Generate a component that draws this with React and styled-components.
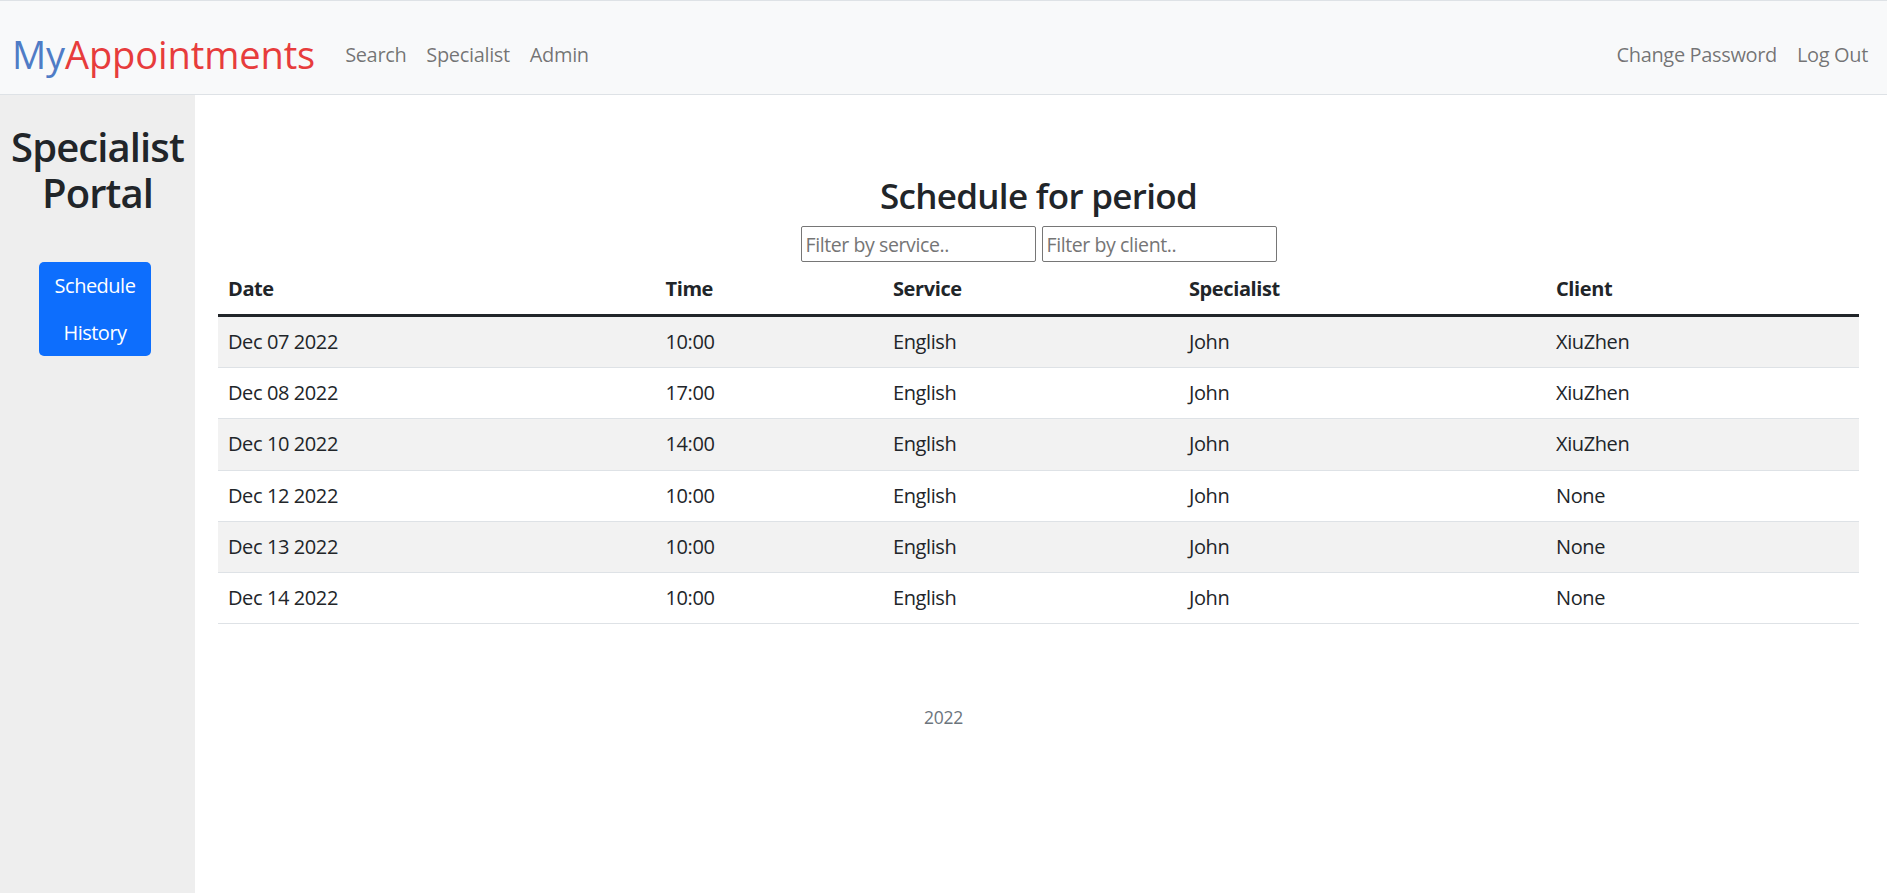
import React from "react";
import styled, { createGlobalStyle } from "styled-components";

/* ========================
   Global
   ======================== */
const GlobalStyle = createGlobalStyle`
  * {
    margin: 0;
    padding: 0;
    box-sizing: border-box;
  }
  body {
    font-family: "Open Sans", "Noto Sans", sans-serif;
    font-size: 20px;
    line-height: 1.5;
    color: #212529;
    background: #ffffff;
  }
`;

/* ========================
   Navbar
   ======================== */
const Navbar = styled.nav`
  display: flex;
  align-items: center;
  height: 95px;
  padding: 14px 9px 0 12px;
  background: #f8f9fa;
  border-top: 1px solid #dee2e6;
  border-bottom: 1px solid #dee2e6;
`;
const Brand = styled.a`
  font-size: 38px;
  line-height: 1.5;
  margin-right: 20px;
  text-decoration: none;
  letter-spacing: -0.1px;
`;
const BrandPart = styled.span`
  color: ${(p) => p.$color};
`;
const NavGroup = styled.div`
  display: flex;
  align-items: center;
  margin-left: ${(p) => (p.$right ? "auto" : "0")};
`;
const NavLink = styled.a`
  padding: 10px;
  font-size: 20px;
  color: rgba(0, 0, 0, 0.55);
  text-decoration: none;
  letter-spacing: -0.35px;
  cursor: pointer;
`;

/* ========================
   Page body
   ======================== */
const Layout = styled.div`
  display: flex;
  min-height: calc(100vh - 95px);
`;
const Sidebar = styled.aside`
  width: 195px;
  flex-shrink: 0;
  background: #eeeeee;
  padding-top: 29px;
  display: flex;
  flex-direction: column;
  align-items: center;
`;
const PortalTitle = styled.h2`
  font-size: 40px;
  font-weight: 600;
  line-height: 46px;
  text-align: center;
  letter-spacing: -0.9px;
  margin-bottom: 46px;
`;
const SideMenu = styled.div`
  width: 112px;
  margin-right: 5px;
  background: #0d6efd;
  border-radius: 5px;
  display: flex;
  flex-direction: column;
`;
const SideLink = styled.a`
  height: 47px;
  line-height: 47px;
  text-align: center;
  color: #ffffff;
  font-size: 20px;
  letter-spacing: -0.5px;
  text-decoration: none;
  cursor: pointer;
`;

const Main = styled.main`
  flex: 1;
  padding: 80px 28px 0 23px;
`;
const Title = styled.h3`
  font-size: 35px;
  font-weight: 600;
  line-height: 42px;
  text-align: center;
  letter-spacing: -0.7px;
  margin-bottom: 9px;
`;
const Filters = styled.div`
  display: flex;
  justify-content: center;
  gap: 6px;
  margin-bottom: 2px;
`;
const FilterInput = styled.input`
  width: 235px;
  height: 36px;
  padding: 0 4px;
  font-family: "Open Sans", sans-serif;
  font-size: 19.5px;
  letter-spacing: -0.4px;
  color: #212529;
  border: 1px solid #767676;
  border-radius: 2px;
  background: #fff;
  &::placeholder {
    color: #757575;
  }
`;

/* Table */
const Table = styled.table`
  width: 100%;
  table-layout: fixed;
  border-collapse: collapse;
  letter-spacing: -0.4px;
`;
const HeadCell = styled.th`
  text-align: left;
  font-weight: 700;
  padding: 10px;
  height: 51px;
  border-bottom: 3px solid #212529;
`;
const Row = styled.tr`
  background: ${(p) => (p.$striped ? "#f2f2f2" : "#ffffff")};
`;
const Cell = styled.td`
  padding: 10px;
  height: 51.3px;
  border-bottom: 1px solid #dee2e6;
`;

const Footer = styled.footer`
  margin-top: 80px;
  padding-right: 190px;
  text-align: center;
  font-size: 17.5px;
  color: #6c757d;
  letter-spacing: -0.3px;
`;

const columns = [
  { label: "Date", width: 437.5 },
  { label: "Time", width: 227.5 },
  { label: "Service", width: 296 },
  { label: "Specialist", width: 367 },
  { label: "Client", width: 313 },
];

const appointments = [
  { date: "Dec 07 2022", time: "10:00", service: "English", specialist: "John", client: "XiuZhen" },
  { date: "Dec 08 2022", time: "17:00", service: "English", specialist: "John", client: "XiuZhen" },
  { date: "Dec 10 2022", time: "14:00", service: "English", specialist: "John", client: "XiuZhen" },
  { date: "Dec 12 2022", time: "10:00", service: "English", specialist: "John", client: "None" },
  { date: "Dec 13 2022", time: "10:00", service: "English", specialist: "John", client: "None" },
  { date: "Dec 14 2022", time: "10:00", service: "English", specialist: "John", client: "None" },
];

const App = () => {
  return (
    <>
      <GlobalStyle />
      <Navbar>
        <Brand>
          <BrandPart $color="#4f7cc6">My</BrandPart>
          <BrandPart $color="#e73c3c">Appointments</BrandPart>
        </Brand>
        <NavGroup>
          <NavLink>Search</NavLink>
          <NavLink>Specialist</NavLink>
          <NavLink>Admin</NavLink>
        </NavGroup>
        <NavGroup $right>
          <NavLink>Change Password</NavLink>
          <NavLink>Log Out</NavLink>
        </NavGroup>
      </Navbar>

      <Layout>
        <Sidebar>
          <PortalTitle>
            Specialist
            <br />
            Portal
          </PortalTitle>
          <SideMenu>
            <SideLink>Schedule</SideLink>
            <SideLink>History</SideLink>
          </SideMenu>
        </Sidebar>

        <Main>
          <Title>Schedule for period</Title>
          <Filters>
            <FilterInput placeholder="Filter by service.." />
            <FilterInput placeholder="Filter by client.." />
          </Filters>
          <Table>
            <colgroup>
              {columns.map((c) => (
                <col key={c.label} style={{ width: c.width }} />
              ))}
            </colgroup>
            <thead>
              <tr>
                {columns.map((c) => (
                  <HeadCell key={c.label}>{c.label}</HeadCell>
                ))}
              </tr>
            </thead>
            <tbody>
              {appointments.map((a, i) => (
                <Row key={a.date} $striped={i % 2 === 0}>
                  <Cell>{a.date}</Cell>
                  <Cell>{a.time}</Cell>
                  <Cell>{a.service}</Cell>
                  <Cell>{a.specialist}</Cell>
                  <Cell>{a.client}</Cell>
                </Row>
              ))}
            </tbody>
          </Table>
          <Footer>2022</Footer>
        </Main>
      </Layout>
    </>
  );
};

export default App;
